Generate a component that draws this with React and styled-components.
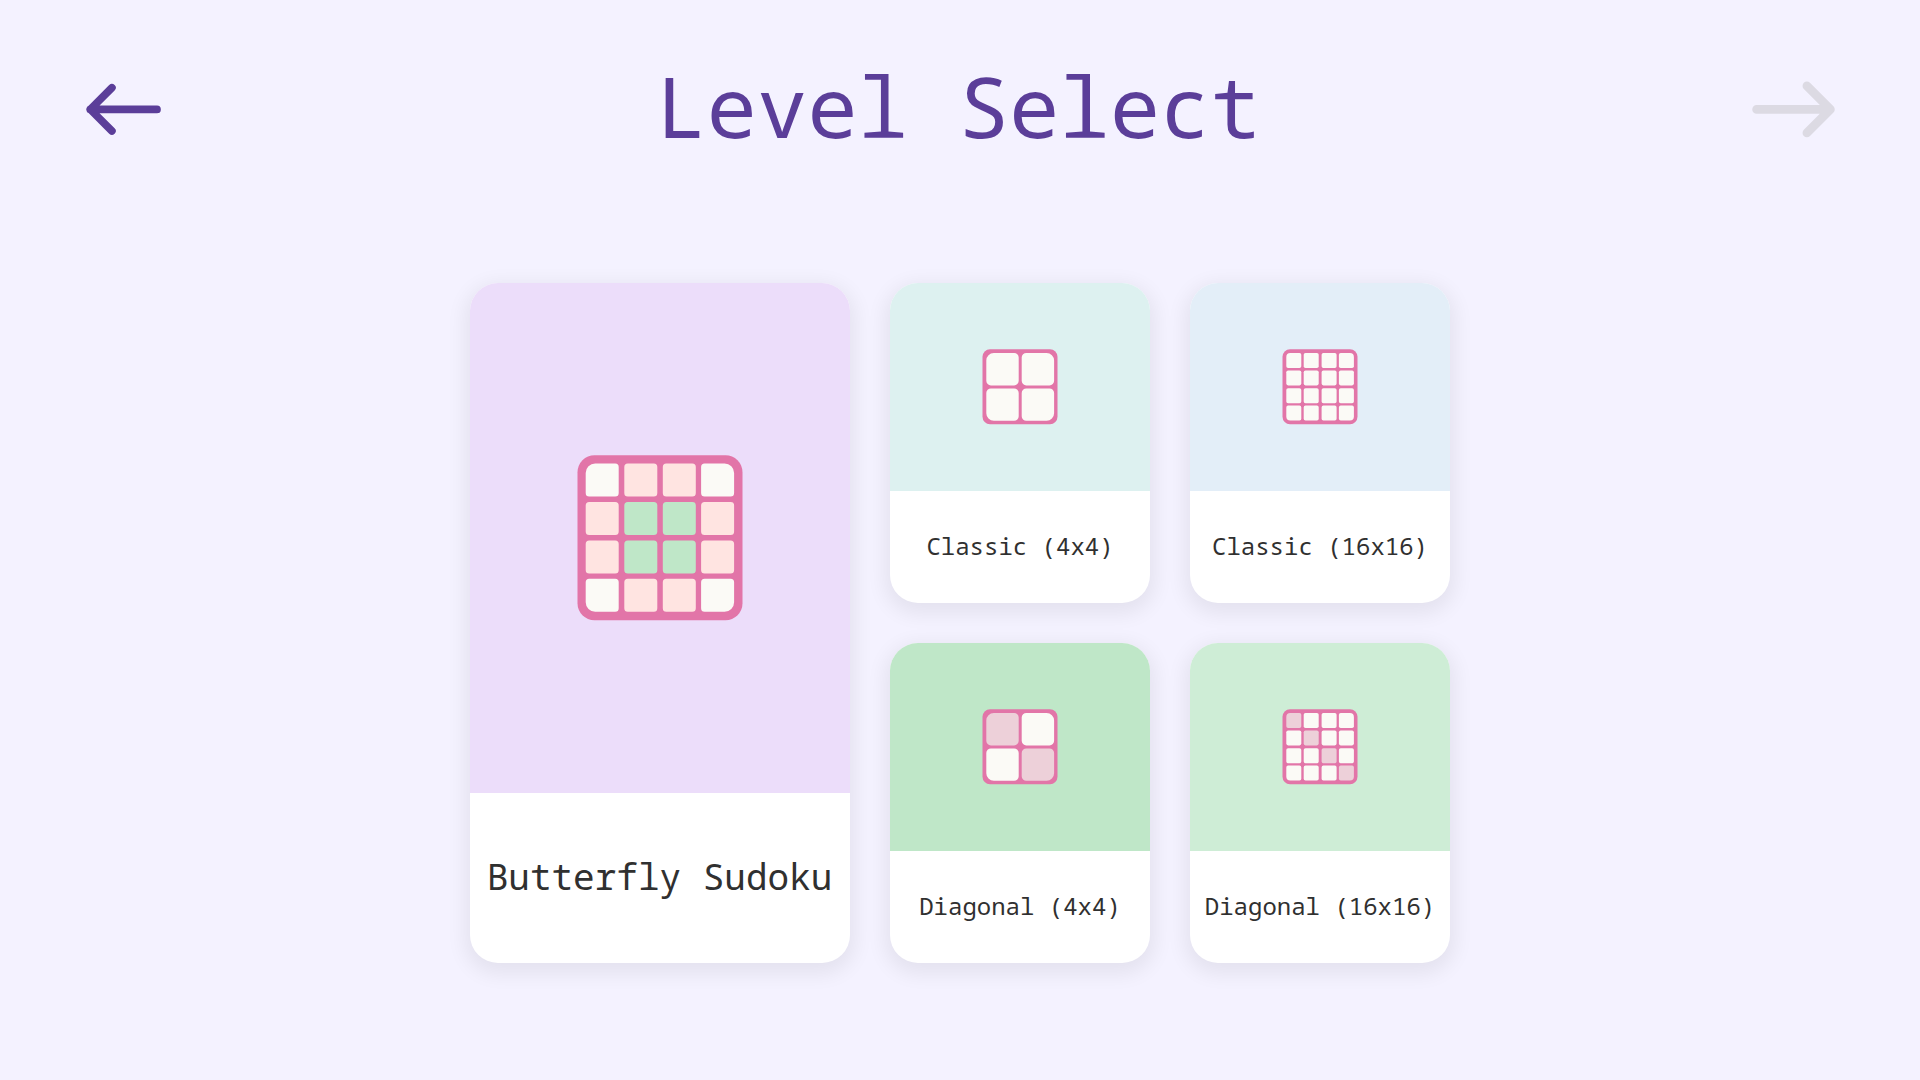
import React from "react";
import styled, { createGlobalStyle } from "styled-components";

const purple = "#5b3e99";
const disabledGrey = "#dcdae3";
const gridPink = "#e275a8";
const cellWhite = "#fbfaf6";
const cellPink = "#ffe4e1";
const cellGreen = "#bfe7c8";
const cellRose = "#edd0d9";

const w = cellWhite;
const p = cellPink;
const g = cellGreen;
const r = cellRose;

const featured = {
  name: "Butterfly Sudoku",
  color: "#ecddfa",
  cells: [w, p, p, w, p, g, g, p, p, g, g, p, w, p, p, w],
};

const levels = [
  {
    name: "Classic (4x4)",
    color: "#ddf1f0",
    cells: [w, w, w, w],
  },
  {
    name: "Classic (16x16)",
    color: "#e3eef8",
    cells: [w, w, w, w, w, w, w, w, w, w, w, w, w, w, w, w],
  },
  {
    name: "Diagonal (4x4)",
    color: "#bfe7c8",
    cells: [r, w, w, r],
  },
  {
    name: "Diagonal (16x16)",
    color: "#ceedd6",
    cells: [r, w, w, w, w, r, w, w, w, w, r, w, w, w, w, r],
  },
];

// grid geometry for each size of board icon
const boards = {
  big: { size: 165, radius: 17, starts: [8.2, 46.8, 85.3, 123.6], cell: 33, outer: 9.5, inner: 3.5 },
  four: { size: 75, radius: 7.5, starts: [3.8, 39.2], cell: 32.4, outer: 7.5, inner: 4.6 },
  sixteen: { size: 75, radius: 7.5, starts: [3.8, 21.2, 39.1, 56.4], cell: 15, outer: 4, inner: 1.8 },
};

const cellPath = (x, y, s, tl, tr, br, bl) =>
  `M${x + tl} ${y}H${x + s - tr}a${tr} ${tr} 0 0 1 ${tr} ${tr}V${y + s - br}` +
  `a${br} ${br} 0 0 1 ${-br} ${br}H${x + bl}a${bl} ${bl} 0 0 1 ${-bl} ${-bl}` +
  `V${y + tl}a${tl} ${tl} 0 0 1 ${tl} ${-tl}Z`;

const BoardIcon = ({ type, cells }) => {
  const { size, radius, starts, cell, outer, inner } = boards[type];
  const n = starts.length;
  const last = n - 1;
  const box = size + 1;

  return (
    <svg width={box} height={box} viewBox={`-0.5 -0.2 ${box} ${box}`}>
      <rect width={size} height={size} rx={radius} fill={gridPink} />
      {cells.map((fill, i) => {
        const col = i % n;
        const row = Math.floor(i / n);
        return (
          <path
            key={i}
            fill={fill}
            d={cellPath(
              starts[col],
              starts[row],
              cell,
              col === 0 && row === 0 ? outer : inner,
              col === last && row === 0 ? outer : inner,
              col === last && row === last ? outer : inner,
              col === 0 && row === last ? outer : inner
            )}
          />
        );
      })}
    </svg>
  );
};

const LevelCard = ({ level, type, large }) => (
  <Card $large={large}>
    <Preview $large={large} $color={level.color}>
      <BoardIcon type={type} cells={level.cells} />
    </Preview>
    <Label $large={large}>{level.name}</Label>
  </Card>
);

const App = () => {
  return (
    <>
      <GlobalStyle />
      <Page>
        <Header>
          <ArrowButton aria-label="Back">
            <svg width="84" height="60" viewBox="0 0 84 60">
              <path
                d="M75 30.4H8.3M29.9 8.8L8.3 30.4l21.6 21.6"
                fill="none"
                stroke={purple}
                strokeWidth="7.7"
                strokeLinecap="round"
                strokeLinejoin="round"
              />
            </svg>
          </ArrowButton>
          <Title>Level Select</Title>
          <ArrowButton aria-label="Next" disabled>
            <svg width="84" height="60" viewBox="0 0 84 60">
              <path
                d="M2.6 30.4h73.6M52.9 6.9l23.5 23.5-23.5 23.5"
                fill="none"
                stroke={disabledGrey}
                strokeWidth="8.7"
                strokeLinecap="round"
                strokeLinejoin="round"
                overflow="visible"
              />
            </svg>
          </ArrowButton>
        </Header>
        <Levels>
          <LevelCard level={featured} type="big" large />
          {levels.map((level) => (
            <LevelCard
              key={level.name}
              level={level}
              type={level.cells.length === 4 ? "four" : "sixteen"}
            />
          ))}
        </Levels>
      </Page>
    </>
  );
};

const GlobalStyle = createGlobalStyle`
  * {
    box-sizing: border-box;
  }
  body {
    margin: 0;
    background: #f4f2ff;
    font-family: "Noto Sans Mono", "Droid Sans Mono", "DejaVu Sans Mono", monospace;
  }
`;

const Page = styled.main`
  display: flex;
  flex-direction: column;
  align-items: center;
  width: 100%;
  height: 1080px;
  overflow: hidden;
`;

const Header = styled.header`
  display: flex;
  justify-content: space-between;
  align-items: center;
  width: 100%;
  height: 218px;
  padding: 0 82px;
`;

const Title = styled.h1`
  margin: 0;
  padding: 0 3px 6px 0;
  color: ${purple};
  font-size: 84px;
  font-weight: 400;
  line-height: 114px;
  white-space: nowrap;
`;

const ArrowButton = styled.button`
  display: flex;
  padding: 0;
  border: none;
  background: none;
  cursor: pointer;
  &:disabled {
    cursor: not-allowed;
  }
  svg {
    overflow: visible;
  }
`;

const Levels = styled.section`
  display: grid;
  grid-template-columns: 380px 260px 260px;
  grid-template-rows: 320px 320px;
  gap: 40px;
  margin-top: 65px;
`;

const Card = styled.article`
  display: flex;
  flex-direction: column;
  grid-row: ${({ $large }) => ($large ? "span 2" : "auto")};
  overflow: hidden;
  border-radius: 28px;
  background: #ffffff;
  box-shadow: 0 6px 20px 5px rgba(0, 0, 0, 0.065);
`;

const Preview = styled.div`
  display: flex;
  align-items: center;
  justify-content: center;
  height: ${({ $large }) => ($large ? "510px" : "208px")};
  background: ${({ $color }) => $color};
`;

const Label = styled.div`
  display: flex;
  flex: 1;
  align-items: center;
  justify-content: center;
  padding: ${({ $large }) => ($large ? "0 1px 3px 0" : "0 0 4px")};
  color: #303030;
  font-size: ${({ $large }) => ($large ? "36px" : "24px")};
  white-space: nowrap;
`;

export default App;
